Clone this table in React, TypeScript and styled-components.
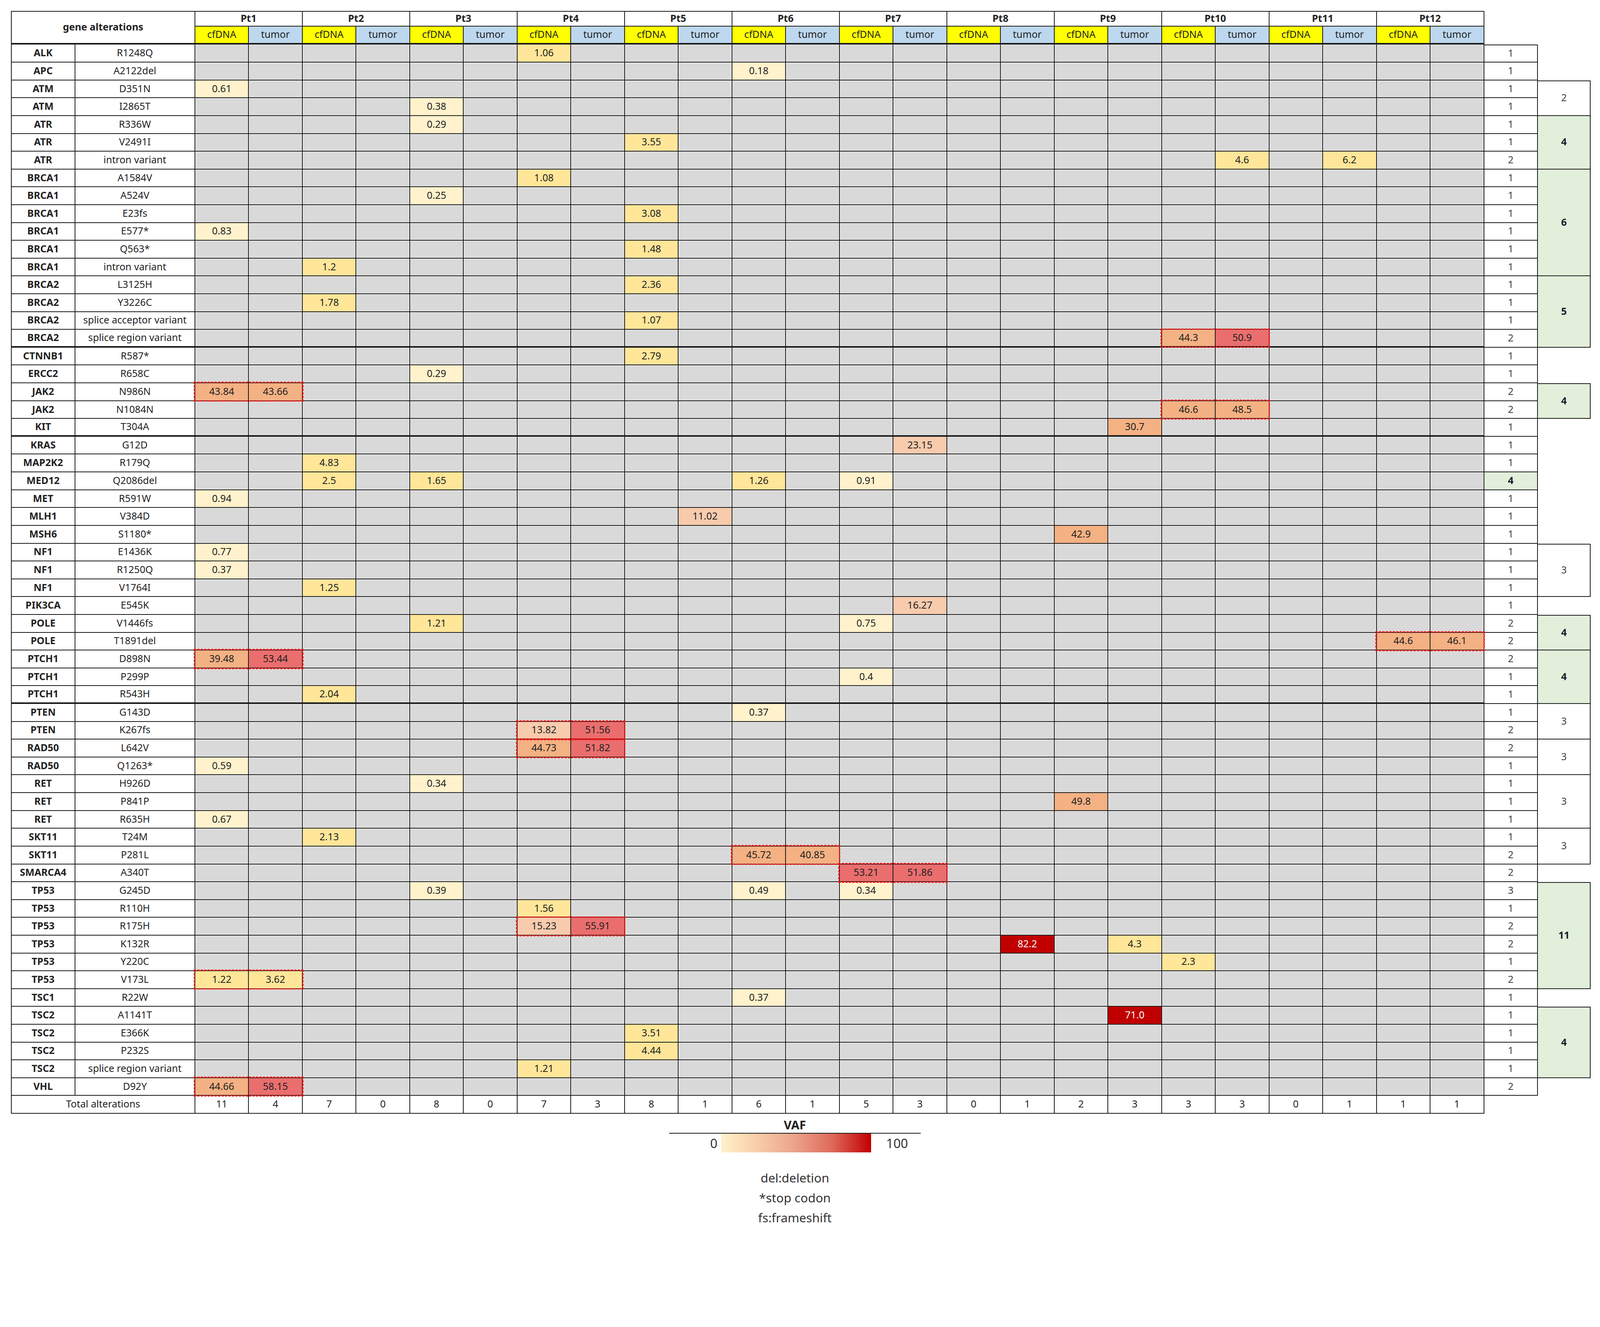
import React from 'react'
import styled, { createGlobalStyle } from 'styled-components'

const LINE = '#1a1a1a'
const FONT = '"Noto Sans", "Liberation Sans", Arial, sans-serif'
const FRAME_WIDTH = 4400

interface RowData {
    g: string
    v: string
    d: { [col: number]: string }
    n: number
    dash?: number
    thick?: boolean
    hi?: boolean
}

interface Group {
    start: number
    len: number
    value: string
    green?: boolean
}

const rows: RowData[] = [
    { g: 'ALK', v: 'R1248Q', d: { 6: '1.06' }, n: 1 },
    { g: 'APC', v: 'A2122del', d: { 10: '0.18' }, n: 1 },
    { g: 'ATM', v: 'D351N', d: { 0: '0.61' }, n: 1 },
    { g: 'ATM', v: 'I2865T', d: { 4: '0.38' }, n: 1 },
    { g: 'ATR', v: 'R336W', d: { 4: '0.29' }, n: 1 },
    { g: 'ATR', v: 'V2491I', d: { 8: '3.55' }, n: 1 },
    { g: 'ATR', v: 'intron variant', d: { 19: '4.6', 21: '6.2' }, n: 2 },
    { g: 'BRCA1', v: 'A1584V', d: { 6: '1.08' }, n: 1 },
    { g: 'BRCA1', v: 'A524V', d: { 4: '0.25' }, n: 1 },
    { g: 'BRCA1', v: 'E23fs', d: { 8: '3.08' }, n: 1 },
    { g: 'BRCA1', v: 'E577*', d: { 0: '0.83' }, n: 1 },
    { g: 'BRCA1', v: 'Q563*', d: { 8: '1.48' }, n: 1 },
    { g: 'BRCA1', v: 'intron variant', d: { 2: '1.2' }, n: 1 },
    { g: 'BRCA2', v: 'L3125H', d: { 8: '2.36' }, n: 1 },
    { g: 'BRCA2', v: 'Y3226C', d: { 2: '1.78' }, n: 1 },
    { g: 'BRCA2', v: 'splice acceptor variant', d: { 8: '1.07' }, n: 1 },
    { g: 'BRCA2', v: 'splice region variant', d: { 18: '44.3', 19: '50.9' }, dash: 18, n: 2, thick: true },
    { g: 'CTNNB1', v: 'R587*', d: { 8: '2.79' }, n: 1 },
    { g: 'ERCC2', v: 'R658C', d: { 4: '0.29' }, n: 1 },
    { g: 'JAK2', v: 'N986N', d: { 0: '43.84', 1: '43.66' }, dash: 0, n: 2 },
    { g: 'JAK2', v: 'N1084N', d: { 18: '46.6', 19: '48.5' }, dash: 18, n: 2 },
    { g: 'KIT', v: 'T304A', d: { 17: '30.7' }, n: 1, thick: true },
    { g: 'KRAS', v: 'G12D', d: { 13: '23.15' }, n: 1 },
    { g: 'MAP2K2', v: 'R179Q', d: { 2: '4.83' }, n: 1 },
    { g: 'MED12', v: 'Q2086del', d: { 2: '2.5', 4: '1.65', 10: '1.26', 12: '0.91' }, n: 4, hi: true },
    { g: 'MET', v: 'R591W', d: { 0: '0.94' }, n: 1 },
    { g: 'MLH1', v: 'V384D', d: { 9: '11.02' }, n: 1 },
    { g: 'MSH6', v: 'S1180*', d: { 16: '42.9' }, n: 1 },
    { g: 'NF1', v: 'E1436K', d: { 0: '0.77' }, n: 1 },
    { g: 'NF1', v: 'R1250Q', d: { 0: '0.37' }, n: 1 },
    { g: 'NF1', v: 'V1764I', d: { 2: '1.25' }, n: 1 },
    { g: 'PIK3CA', v: 'E545K', d: { 13: '16.27' }, n: 1 },
    { g: 'POLE', v: 'V1446fs', d: { 4: '1.21', 12: '0.75' }, n: 2 },
    { g: 'POLE', v: 'T1891del', d: { 22: '44.6', 23: '46.1' }, dash: 22, n: 2 },
    { g: 'PTCH1', v: 'D898N', d: { 0: '39.48', 1: '53.44' }, dash: 0, n: 2 },
    { g: 'PTCH1', v: 'P299P', d: { 12: '0.4' }, n: 1 },
    { g: 'PTCH1', v: 'R543H', d: { 2: '2.04' }, n: 1, thick: true },
    { g: 'PTEN', v: 'G143D', d: { 10: '0.37' }, n: 1 },
    { g: 'PTEN', v: 'K267fs', d: { 6: '13.82', 7: '51.56' }, dash: 6, n: 2 },
    { g: 'RAD50', v: 'L642V', d: { 6: '44.73', 7: '51.82' }, dash: 6, n: 2 },
    { g: 'RAD50', v: 'Q1263*', d: { 0: '0.59' }, n: 1 },
    { g: 'RET', v: 'H926D', d: { 4: '0.34' }, n: 1 },
    { g: 'RET', v: 'P841P', d: { 16: '49.8' }, n: 1 },
    { g: 'RET', v: 'R635H', d: { 0: '0.67' }, n: 1 },
    { g: 'SKT11', v: 'T24M', d: { 2: '2.13' }, n: 1 },
    { g: 'SKT11', v: 'P281L', d: { 10: '45.72', 11: '40.85' }, dash: 10, n: 2 },
    { g: 'SMARCA4', v: 'A340T', d: { 12: '53.21', 13: '51.86' }, dash: 12, n: 2 },
    { g: 'TP53', v: 'G245D', d: { 4: '0.39', 10: '0.49', 12: '0.34' }, n: 3 },
    { g: 'TP53', v: 'R110H', d: { 6: '1.56' }, n: 1 },
    { g: 'TP53', v: 'R175H', d: { 6: '15.23', 7: '55.91' }, dash: 6, n: 2 },
    { g: 'TP53', v: 'K132R', d: { 15: '82.2', 17: '4.3' }, n: 2 },
    { g: 'TP53', v: 'Y220C', d: { 18: '2.3' }, n: 1 },
    { g: 'TP53', v: 'V173L', d: { 0: '1.22', 1: '3.62' }, dash: 0, n: 2 },
    { g: 'TSC1', v: 'R22W', d: { 10: '0.37' }, n: 1 },
    { g: 'TSC2', v: 'A1141T', d: { 17: '71.0' }, n: 1 },
    { g: 'TSC2', v: 'E366K', d: { 8: '3.51' }, n: 1 },
    { g: 'TSC2', v: 'P232S', d: { 8: '4.44' }, n: 1 },
    { g: 'TSC2', v: 'splice region variant', d: { 6: '1.21' }, n: 1 },
    { g: 'VHL', v: 'D92Y', d: { 0: '44.66', 1: '58.15' }, dash: 0, n: 2 },
]

const groups: Group[] = [
    { start: 2, len: 2, value: '2' },
    { start: 4, len: 3, value: '4', green: true },
    { start: 7, len: 6, value: '6', green: true },
    { start: 13, len: 4, value: '5', green: true },
    { start: 19, len: 2, value: '4', green: true },
    { start: 28, len: 3, value: '3' },
    { start: 32, len: 2, value: '4', green: true },
    { start: 34, len: 3, value: '4', green: true },
    { start: 37, len: 2, value: '3' },
    { start: 39, len: 2, value: '3' },
    { start: 41, len: 3, value: '3' },
    { start: 44, len: 2, value: '3' },
    { start: 47, len: 6, value: '11', green: true },
    { start: 54, len: 4, value: '4', green: true },
]

const totals = ['11', '4', '7', '0', '8', '0', '7', '3', '8', '1', '6', '1', '5', '3', '0', '1', '2', '3', '3', '3', '0', '1', '1', '1']

const vafColour = (v: number) => {
    if (v < 1) return '#fff2cc'
    if (v < 10) return '#ffe699'
    if (v < 25) return '#f8cbad'
    if (v < 50) return '#f4b183'
    if (v < 70) return '#ea6e6e'
    return '#c00000'
}

const GlobalStyle = createGlobalStyle`
    html, body {
        margin: 0;
        background: #ffffff;
        font-family: ${FONT};
    }
`

const Page = styled.div`
    padding: 30px 0 0 30px;
    width: 4370px;
`

const Sheet = styled.div`
    display: grid;
    grid-template-columns: 177px 330px repeat(24, 147.7px) 148px 145px;
    grid-template-rows: 43px 50px repeat(60, 49px);
    font-size: 27px;
    color: #222;
`

const BaseCell = styled.div`
    box-sizing: border-box;
    display: flex;
    align-items: center;
    justify-content: center;
    padding-bottom: 3px;
    white-space: nowrap;
    line-height: 1;
`

const TitleCell = styled(BaseCell)`
    grid-column: span 2;
    grid-row: span 2;
    font-weight: 700;
    border: 3px solid ${LINE};
    border-bottom-width: 5px;
`

const PatientCell = styled(BaseCell)`
    grid-column: span 2;
    font-weight: 700;
    border-top: 3px solid ${LINE};
    border-right: 3px solid ${LINE};
    border-bottom: 3px solid ${LINE};
`

const SampleCell = styled(BaseCell)<{ $tumor?: boolean }>`
    background: ${p => (p.$tumor ? '#bdd7ee' : '#ffff00')};
    border-right: 3px solid ${LINE};
    border-bottom: 5px solid ${LINE};
`

const SideHead = styled.div`
    grid-row: span 2;
`

const GeneCell = styled(BaseCell)<{ $thick?: boolean }>`
    font-weight: 700;
    border-left: 3px solid ${LINE};
    border-right: 3px solid ${LINE};
    border-bottom: ${p => (p.$thick ? 5 : 3)}px solid ${LINE};
`

const VariantCell = styled(BaseCell)<{ $thick?: boolean }>`
    border-right: 3px solid ${LINE};
    border-bottom: ${p => (p.$thick ? 5 : 3)}px solid ${LINE};
`

const TotalLabel = styled(BaseCell)`
    grid-column: span 2;
    border-left: 3px solid ${LINE};
    border-right: 3px solid ${LINE};
    border-bottom: 3px solid ${LINE};
`

const ValueCell = styled(BaseCell)<{ $bg: string; $fg?: string; $thick?: boolean; $dash?: 'l' | 'r'; $empty?: boolean }>`
    position: relative;
    background: ${p => p.$bg};
    color: ${p => p.$fg ?? '#222'};
    border-right: 3px solid ${LINE};
    border-bottom: ${p => (p.$thick ? 5 : 3)}px solid ${LINE};
    box-shadow: ${p => (p.$empty ? 'inset 0 0 0 2px #e4e4e4' : 'none')};

    &::after {
        content: '';
        display: ${p => (p.$dash ? 'block' : 'none')};
        position: absolute;
        z-index: 2;
        top: -4px;
        bottom: -4px;
        left: ${p => (p.$dash === 'l' ? '-4px' : '0')};
        right: ${p => (p.$dash === 'r' ? '-4px' : '0')};
        border-top: 4px dashed #ff1010;
        border-bottom: 4px dashed #ff1010;
        border-left: ${p => (p.$dash === 'l' ? '4px dashed #ff1010' : 'none')};
        border-right: ${p => (p.$dash === 'r' ? '4px dashed #ff1010' : 'none')};
    }
`

const CountCell = styled(BaseCell)<{ $hi?: boolean; $top?: boolean }>`
    background: ${p => (p.$hi ? '#e2efda' : '#ffffff')};
    font-weight: ${p => (p.$hi ? 700 : 400)};
    color: ${p => (p.$hi ? '#1a1a2a' : '#404040')};
    border-right: 3px solid ${LINE};
    border-bottom: 3px solid ${LINE};
    border-top: ${p => (p.$top ? `3px solid ${LINE}` : 'none')};
`

const GroupCell = styled(BaseCell)<{ $span: number; $green?: boolean; $top?: boolean }>`
    grid-row: span ${p => p.$span};
    background: ${p => (p.$green ? '#e2efda' : '#ffffff')};
    font-weight: ${p => (p.$green ? 700 : 400)};
    color: ${p => (p.$green ? '#1a1a2a' : '#404040')};
    border-right: 3px solid ${LINE};
    border-bottom: 3px solid ${LINE};
    border-top: ${p => (p.$top ? `3px solid ${LINE}` : 'none')};
`

const EmptySlot = styled.div``

const Legend = styled.div`
    width: 692px;
    margin: 9px 0 0 1810px;
    display: flex;
    flex-direction: column;
    color: #222;
`

const LegendTitle = styled.div`
    text-align: center;
    font-weight: 700;
    font-size: 33px;
    line-height: 44px;
    border-bottom: 3px solid ${LINE};
`

const Scale = styled.div`
    display: flex;
    align-items: center;
    height: 51px;
`

const ScaleLabel = styled.span<{ $end?: boolean }>`
    box-sizing: border-box;
    width: ${p => (p.$end ? '137px' : '143px')};
    text-align: ${p => (p.$end ? 'left' : 'right')};
    padding: ${p => (p.$end ? '0 0 0 42px' : '0 10px 0 0')};
    font-size: 35px;
    color: #333;
`

const ScaleBar = styled.div`
    width: 412px;
    height: 51px;
    background: linear-gradient(90deg, #fff2cc 0%, #f7cda9 24%, #eca48e 48%, #de6a5a 74%, #c00000 100%);
`

const Notes = styled.div`
    margin-top: 42px;
    text-align: center;
    font-size: 34px;
    line-height: 55px;
    color: #333;
`

const groupAt = (i: number) => groups.find(g => g.start === i)
const inGroup = (i: number) => groups.some(g => i >= g.start && i < g.start + g.len)

// the sheet is drawn at the 4400px frame size; fit it to whatever width the viewport really has
const frameScale = () => {
    if (typeof document === 'undefined') return 1
    const w = document.documentElement.clientWidth || window.innerWidth
    return w > 0 ? w / FRAME_WIDTH : 1
}

const App = () => {
    const patients = Array.from({ length: 12 }, (_, i) => `Pt${i + 1}`)
    const scale = frameScale()

    return (
        <Page style={{ zoom: scale }}>
            <GlobalStyle />
            <Sheet>
                <TitleCell>gene alterations</TitleCell>
                {patients.map(p => (
                    <PatientCell key={p}>{p}</PatientCell>
                ))}
                <SideHead />
                <SideHead />
                {patients.map(p => (
                    <React.Fragment key={p + 's'}>
                        <SampleCell>cfDNA</SampleCell>
                        <SampleCell $tumor>tumor</SampleCell>
                    </React.Fragment>
                ))}

                {rows.map((r, i) => {
                    const grp = groupAt(i)
                    return (
                        <React.Fragment key={i}>
                            <GeneCell $thick={r.thick}>{r.g}</GeneCell>
                            <VariantCell $thick={r.thick}>{r.v}</VariantCell>
                            {Array.from({ length: 24 }, (_, c) => {
                                const val = r.d[c]
                                const num = val ? parseFloat(val) : 0
                                let dash: 'l' | 'r' | undefined
                                if (r.dash !== undefined && c === r.dash) dash = 'l'
                                if (r.dash !== undefined && c === r.dash + 1) dash = 'r'
                                return (
                                    <ValueCell
                                        key={c}
                                        $bg={val ? vafColour(num) : '#d9d9d9'}
                                        $fg={val && num >= 70 ? '#ffffff' : undefined}
                                        $thick={r.thick}
                                        $dash={dash}
                                        $empty={!val}
                                    >
                                        {val ?? ''}
                                    </ValueCell>
                                )
                            })}
                            <CountCell $hi={r.hi} $top={i === 0}>{r.n}</CountCell>
                            {grp ? (
                                <GroupCell $span={grp.len} $green={grp.green} $top={!inGroup(i - 1)}>
                                    {grp.value}
                                </GroupCell>
                            ) : inGroup(i) ? null : (
                                <EmptySlot />
                            )}
                        </React.Fragment>
                    )
                })}

                <TotalLabel>Total alterations</TotalLabel>
                {totals.map((t, c) => (
                    <ValueCell key={c} $bg="#ffffff">
                        {t}
                    </ValueCell>
                ))}
                <EmptySlot />
                <EmptySlot />
            </Sheet>

            <Legend>
                <LegendTitle>VAF</LegendTitle>
                <Scale>
                    <ScaleLabel>0</ScaleLabel>
                    <ScaleBar />
                    <ScaleLabel $end>100</ScaleLabel>
                </Scale>
                <Notes>
                    <div>del:deletion</div>
                    <div>*stop codon</div>
                    <div>fs:frameshift</div>
                </Notes>
            </Legend>
        </Page>
    )
}

export default App
